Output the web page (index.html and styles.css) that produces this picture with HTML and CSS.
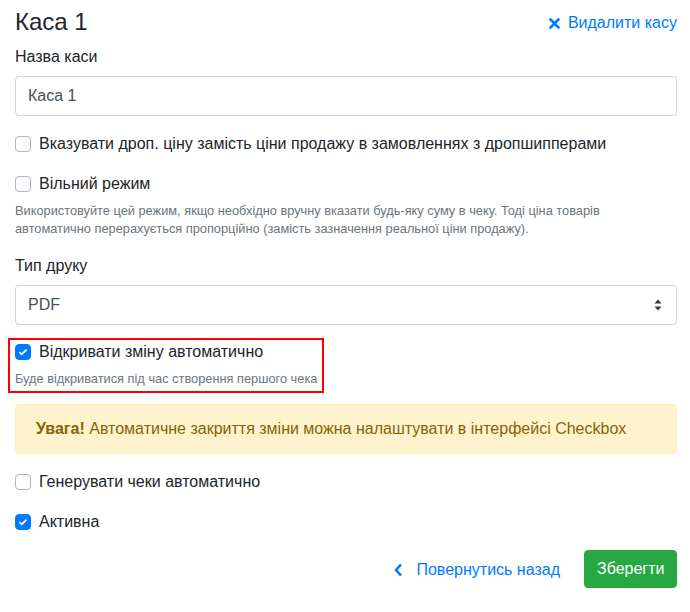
FILE: index.html
```html
<!DOCTYPE html>
<html>
	<head>
		<meta charset="UTF-8">
		<title>Каса 1</title>
		<link rel="stylesheet" href="styles.css">
	</head>
	<body>
		<div class='header'>
			<h4 class='title'>Каса 1</h4>
			<a href='#' class='delete'>
				<svg width="11" height="11" viewBox="0 0 11 11"><path d="M1.5 1.5L9.5 9.5M9.5 1.5L1.5 9.5" stroke="#007bff" stroke-width="2.6" stroke-linecap="round"/></svg>
				Видалити касу
			</a>
		</div>

		<div class='group'>
			<label class='label'>Назва каси</label>
			<div class='control'>Каса 1</div>
		</div>

		<div class='group'>
			<div class='check'><span class='box'></span>Вказувати дроп. ціну замість ціни продажу в замовленнях з дропшипперами</div>
		</div>

		<div class='group'>
			<div class='check'><span class='box'></span>Вільний режим</div>
			<div class='help'>Використовуйте цей режим, якщо необхідно вручну вказати будь-яку суму в чеку. Тоді ціна товарів автоматично перерахується пропорційно (замість зазначення реальної ціни продажу).</div>
		</div>

		<div class='group'>
			<label class='label label-select'>Тип друку</label>
			<div class='control select'>
				PDF
				<svg width="8" height="12" viewBox="0 0 8 12"><path d="M4 0.5L7.5 4.5H0.5Z M4 11.5L7.5 7.5H0.5Z" fill="#343a40"/></svg>
			</div>
		</div>

		<div class='highlight'>
			<div class='check'><span class='box checked'><svg width="10" height="8" viewBox="0 0 10 8"><path d="M1.5 4.2L3.8 6.3L8.5 1.6" stroke="#fff" stroke-width="1.8" fill="none"/></svg></span>Відкривати зміну автоматично</div>
			<div class='help'>Буде відкриватися під час створення першого чека</div>
		</div>

		<div class='alert'><b>Увага!</b> Автоматичне закриття зміни можна налаштувати в інтерфейсі Checkbox</div>

		<div class='group'>
			<div class='check'><span class='box'></span>Генерувати чеки автоматично</div>
		</div>

		<div class='group'>
			<div class='check'><span class='box checked'><svg width="10" height="8" viewBox="0 0 10 8"><path d="M1.5 4.2L3.8 6.3L8.5 1.6" stroke="#fff" stroke-width="1.8" fill="none"/></svg></span>Активна</div>
		</div>

		<div class='actions'>
			<a href='#' class='back'>
				<svg width="9" height="14" viewBox="0 0 9 14"><path d="M7 1.5L2 7L7 12.5" stroke="#007bff" stroke-width="2.6" fill="none"/></svg>
				Повернутись назад
			</a>
			<button type='button' class='save'>Зберегти</button>
		</div>
	</body>
</html>
```

FILE: styles.css
```css
*{
	box-sizing:border-box;
}
body{
	margin:0;
	padding:0 13px 0 15px;
	font-family:"Liberation Sans", Arial, sans-serif;
	font-size:16px;
	line-height:24px;
	color:#212529;
	background-color:#fff;
}
.header{
	display:flex;
	justify-content:space-between;
	align-items:center;
	margin-top:7px;
}
.title{
	margin:0;
	font-size:24px;
	line-height:29px;
	font-weight:400;
}
.delete{
	display:flex;
	align-items:center;
	gap:8px;
	color:#007bff;
	text-decoration:none;
	margin-top:3px;
}
.group{
	margin-bottom:16px;
}
.label{
	display:block;
	margin-top:9px;
	margin-bottom:7px;
}
.label-select{
	margin-top:0;
	margin-bottom:7px;
}
.control{
	height:40px;
	border:1px solid #ced4da;
	border-radius:4px;
	padding:7px 12px;
	color:#495057;
}
.select{
	display:flex;
	justify-content:space-between;
	align-items:center;
	padding-right:14px;
}
.check{
	display:flex;
	align-items:center;
}
.box{
	width:16px;
	height:16px;
	border:1px solid #adb5bd;
	border-radius:4px;
	margin-right:8px;
	display:flex;
	align-items:center;
	justify-content:center;
	background-color:#fff;
}
.box.checked{
	background-color:#007bff;
	border-color:#007bff;
}
.help{
	margin-top:6px;
	font-size:12.8px;
	line-height:18px;
	color:#6c757d;
}
.highlight{
	width:fit-content;
	margin:-3px 0 11px -7px;
	padding:0 5px 3px 5px;
	border:2px solid #ff0000;
}
.alert{
	background-color:#fff3cd;
	border:1px solid #ffeeba;
	color:#856404;
	border-radius:4px;
	padding:12px 20px;
	margin-bottom:16px;
}
.actions{
	display:flex;
	justify-content:flex-end;
	align-items:center;
	gap:24px;
	margin-top:16px;
}
.back{
	display:flex;
	align-items:center;
	gap:13px;
	color:#007bff;
	text-decoration:none;
	margin-top:1px;
}
.save{
	font-family:inherit;
	font-size:16px;
	line-height:24px;
	color:#fff;
	background-color:#28a745;
	border:1px solid #28a745;
	border-radius:4px;
	padding:6px 12px;
	width:93px;
}
```
